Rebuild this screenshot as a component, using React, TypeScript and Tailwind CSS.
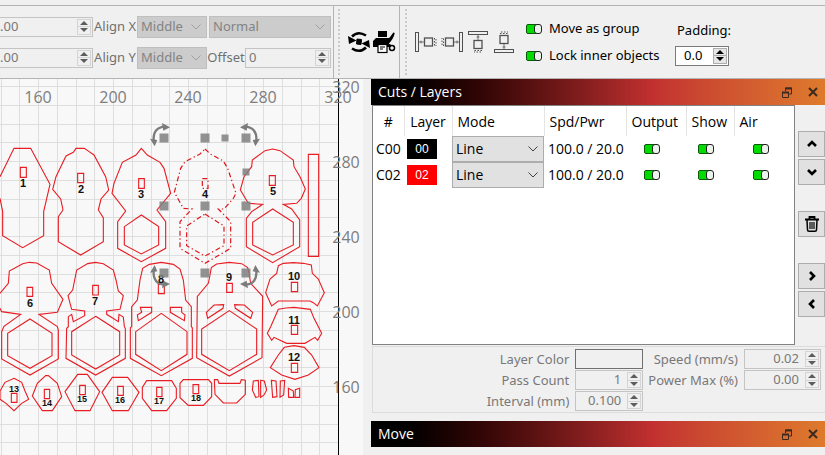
import { type ReactNode, useState } from "react";

const UI = "font-['Noto_Sans',sans-serif]";
const SEGOE = "font-['Open_Sans','Noto_Sans',sans-serif]";

function SpinArrows({ dim = false }: { dim?: boolean }) {
  const edge = dim ? "border-[#d4d4d4]" : "border-[#adadad] bg-[#e6e6e6]";
  const fill = dim ? "#5c5c5c" : "#000000";
  return (
    <span className={`my-px mr-px flex w-[14px] shrink-0 flex-col border ${edge}`}>
      <button type="button" aria-label="Increase" className={`flex flex-1 items-center justify-center border-b ${edge}`}>
        <svg width="8" height="4" viewBox="0 0 8 4"><path d="M4 0L8 4H0Z" fill={fill} /></svg>
      </button>
      <button type="button" aria-label="Decrease" className="flex flex-1 items-center justify-center">
        <svg width="8" height="4" viewBox="0 0 8 4"><path d="M0 0H8L4 4Z" fill={fill} /></svg>
      </button>
    </span>
  );
}

function SpinBox({ id, label, value, box, input, dim = true }: {
  id?: string; label?: string; value: string; box: string; input: string; dim?: boolean;
}) {
  return (
    <span className={`flex h-5 border ${dim ? "border-[#c4c4c4] text-[#787878]" : "border-[#7a7a7a] bg-white text-black"} ${box}`}>
      <input id={id} aria-label={label} defaultValue={value} className={`min-w-0 flex-1 bg-transparent outline-none ${input}`} />
      <SpinArrows dim={dim} />
    </span>
  );
}

function Chevron({ color }: { color: string }) {
  return (
    <svg className="pointer-events-none absolute right-[6px] top-1/2 -translate-y-1/2" width="10" height="6" viewBox="0 0 10 6" fill="none" stroke={color}>
      <path d="M0.5 0.5L5 5L9.5 0.5" />
    </svg>
  );
}

function ToolbarSelect({ id, label, value, width }: { id?: string; label?: string; value: string; width: string }) {
  return (
    <span className={`relative flex h-[22px] ${width}`}>
      <select id={id} aria-label={label} className="w-full appearance-none border border-[#bfbfbf] bg-[#cccccc] pl-[3px] text-[#838383]">
        <option>{value}</option>
      </select>
      <Chevron color="#a0a0a0" />
    </span>
  );
}

function Toggle({ id, label }: { id?: string; label?: string }) {
  const [on, setOn] = useState(true);
  return (
    <span className="relative inline-flex h-[10px] w-4 shrink-0">
      <input id={id} aria-label={label} type="checkbox" checked={on} onChange={() => setOn(!on)} className="absolute inset-0 m-0 opacity-0" />
      <svg className="pointer-events-none" width="16" height="10" viewBox="0 0 16 10" stroke="#202020">
        <rect x="0.5" y="0.5" width="11" height="9" rx="1.5" fill={on ? "#00dc00" : "#d0d0d0"} stroke="#0a5a0a" />
        <rect x="8.5" y="0.5" width="7" height="9" rx="2.5" fill="#ecf2ec" />
      </svg>
    </span>
  );
}

function Grip() {
  return <span className="h-[66px] w-0 border-l-2 border-dotted border-[#cacaca]" />;
}

function DockIcon({ label, turn }: { label: string; turn: number }) {
  return (
    <button type="button" aria-label={label}>
      <svg width="22" height="22" viewBox="-11 -11 22 22" fill="none" stroke="#505050">
        <g transform={`rotate(${turn})`}>
          <rect x="-10.5" y="-9.5" width="3" height="19" />
          <path d="M-7 0H-1M-5 -1.500V1.500" strokeWidth="0.8" />
          <rect x="-1.5" y="-4" width="8" height="8" strokeWidth="1.3" />
          <path d="M8.500 -4V5M10 -3V4" strokeDasharray="1.500 1.500" />
        </g>
      </svg>
    </button>
  );
}

function Toolbar() {
  return (
    <header className="flex h-[74px] border-y border-[#b4b4b4] bg-[#f0f0f0] text-[13px]">
      <div className="flex flex-col justify-center gap-[9px] border-r border-[#b4b4b4] pr-[2px]">
        <div className="flex h-[22px] items-center">
          <SpinBox label="Width" value=".00" box="w-[93px] border-l-0" input="pl-0" />
          <label htmlFor="align-x" className="w-11 whitespace-nowrap text-center text-[#707070]">Align X</label>
          <ToolbarSelect id="align-x" value="Middle" width="w-[70px]" />
          <span className="w-[2px]" />
          <ToolbarSelect label="Mode" value="Normal" width="w-[122px]" />
        </div>
        <div className="flex h-[22px] items-center">
          <SpinBox label="Height" value=".00" box="w-[93px] border-l-0" input="pl-0" />
          <label htmlFor="align-y" className="w-11 whitespace-nowrap text-center text-[#707070]">Align Y</label>
          <ToolbarSelect id="align-y" value="Middle" width="w-[70px]" />
          <label htmlFor="offset" className="w-[38px] text-center text-[#707070]">Offset</label>
          <SpinBox id="offset" value="0" box="w-[86px]" input="pl-[3px]" />
        </div>
      </div>
      <div className="flex w-[66px] items-center border-r border-[#b4b4b4] pl-1">
        <Grip />
        <button type="button" aria-label="Refresh" className="ml-[7px]">
          <svg width="24" height="22" viewBox="0 0 24 22" fill="none" stroke="#000" strokeWidth="2.600">
            <path d="M5 5.500Q11 -0.500 19 4.500M19 16.500Q13 22.500 5 17.500" />
            <path d="M1 5L2 13L9.500 9.500ZM23 17L22 9L14.500 12.500Z" fill="#000" stroke="none" />
            <path d="M10 8L14.500 8.500L14 13.500L9.500 13Z" fill="#000" stroke="#000" strokeWidth="1" />
          </svg>
        </button>
        <button type="button" aria-label="Print and cut" className="ml-[2px]">
          <svg width="24" height="24" viewBox="0 0 24 24">
            <path d="M5 1H14V7H5ZM3 8H16V17H0V11Z" fill="#000" />
            <rect x="5" y="14.500" width="9" height="8" fill="#fff" stroke="#000" strokeWidth="1.200" />
            <path d="M7 17H12M7 19H10" stroke="#000" />
            <path d="M21 3Q20 9 14 14.500L13 12Q18 8 21 3Z" fill="#000" stroke="#000" strokeWidth="1.500" />
            <path d="M13 13.500L18 16" stroke="#000" strokeWidth="2" />
            <circle cx="19" cy="18" r="2.500" fill="none" stroke="#000" strokeWidth="1.500" />
          </svg>
        </button>
      </div>
      <div className="flex flex-1 items-center pl-[5px]">
        <Grip />
        <div className="ml-2 flex gap-1">
          <DockIcon label="Dock left" turn={0} />
          <DockIcon label="Dock right" turn={180} />
          <DockIcon label="Dock top" turn={90} />
          <DockIcon label="Dock bottom" turn={270} />
        </div>
        <div className="ml-[11px] flex flex-col gap-[11px]">
          <label className="flex h-4 w-[149px] items-center gap-[7px] whitespace-nowrap"><Toggle />Move as group</label>
          <label className="flex h-4 w-[149px] items-center gap-[7px] whitespace-nowrap"><Toggle />Lock inner objects</label>
        </div>
        <div className="flex flex-col gap-2 pt-[3px]">
          <label htmlFor="padding" className="h-4 pl-[2px] leading-4">Padding:</label>
          <SpinBox id="padding" value="0.0" box="w-[54px]" input="pl-2" dim={false} />
        </div>
      </div>
    </header>
  );
}

/* Outlines are stored at three units per canvas pixel, one list per area of the sheet. */
const AREAS = [
  {
    place: "translate(0 75) scale(0.33333)",
    shapes: [
      "M0 305L42 220H92L150 328L131 410V482L68 518L8 482V410L0 370M61 277h18v30h-18Z",
      "M228 220H253L262 226L282 240L317 305L326 345L303 372L295 405L310 428V500L242 540L175 500V425L189 405L182 372L158 343L168 305L198 243L220 232ZM233 295h18v28h-18Z",
      "M424 220L442 240L480 262L492 280L512 355L471 405L497 440V520L424 560L353 520V440L377 408L336 355L342 325L367 262L408 240ZM416 311h17v29h-17ZM424 420L476 455V510L424 537L373 510V455Z",
    ],
  },
  {
    place: "translate(140 75) scale(0.33333)",
    shapes: [
      "M398 222L420 227L460 255L462 275L480 305L496 342L484 370L470 385L430 388L455 402L479 435V515L398 563L319 515V430L335 410L368 388L325 385L301 345L312 305L335 275L337 255L375 227ZM388 302h18v29h-18ZM398 402L460 442V510L398 540L338 510V442Z",
      "M505 238h31v306h-31Z",
    ],
  },
  {
    place: "translate(0 255) scale(0.33333)",
    shapes: [
      "M0 115L25 85L28 48L68 26L88 22L110 24L148 45L155 85L189 133L172 172L117 178L172 215L175 225V312L90 360L5 312V230L12 214L62 178L5 170L0 160M81 97h17v27h-17ZM90 192L156 235V302L90 340L23 302V235Z",
      "M262 26L287 22L310 26L340 45L348 75L355 108L370 122L360 163L320 168V178L355 200L357 178L370 186L373 215L376 220V310L287 360L198 310L200 220L205 215V185L215 178L220 200L254 182V168L215 163L204 122L218 105L230 45ZM278 91h17v29h-17ZM287 184L359 230V300L287 342L215 300V230Z",
      "M448 28L484 22L520 28L540 42L550 75L557 135L574 155V215L577 218V310L484 362L391 310V218L395 215V155L412 135L420 75L428 40ZM475 88h18v28h-18ZM484 175L561 230V298L484 347L407 298V230Z",
      "M421 157H455V172L415 197L412 180L425 172ZM545 157H511V172L553 197L555 180L545 172Z",
      "M42 370L65 382L75 408L86 433L65 445L42 467L18 445L0 433V408L15 382ZM34 415h17v27h-17Z",
      "M137 362H145L172 385L185 425L157 467H127L97 423L112 385ZM133 403h16v28h-16Z",
      "M233 358H262L299 410L270 467H225L195 410ZM239 391h17v28h-17Z",
      "M337 367H383L417 412L385 467H337L306 412ZM353 394h17v27h-17Z",
      "M440 377H515L529 400V430L500 467H455L427 430V397ZM470 397h16v28h-16Z",
    ],
  },
  {
    place: "translate(170 255) scale(0.33333)",
    shapes: [
      "M340 25L370 23L400 25L424 30L427 55L445 72L463 113L442 153L430 143L420 138H325L305 153L287 113L300 72L320 55L325 32ZM364 82h19v28h-19Z",
      "M348 159L372 157L421 163L432 190L455 235L443 256L435 247L405 265H350L312 247L305 256L292 235L302 215L325 163ZM364 211h19v27h-19Z",
      "M372 272L403 277L425 300L447 338L415 360L375 373L335 360L301 338L325 300L343 277ZM364 325h19v27h-19Z",
      "M120 60L124 38L140 27L178 22L215 26L233 38L238 60L242 85L278 124L276 308L178 363L80 308L82 124L115 85ZM170 85h17v27h-17ZM178 167L260 222V298L178 347L95 298V222Z",
      "M132 150L161 149L159 160L113 190L109 172ZM223 150L194 149L196 160L242 190L248 172Z",
      "M40 374H115L125 385V425L100 451H55L30 428V385ZM69 389h17v27h-17Z",
      "M133 374H143L147 385H210L214 374L226 376V418L200 444H160L135 418Z",
      "M250 378L265 376L267 425L257 427L247 405ZM272 376L283 378L290 405L282 420L272 427Z",
      "M304 376L318 378L321 425L308 427ZM331 378L344 376L341 420L330 427Z",
      "M355 400L370 408L371 427H356ZM389 400L376 404L375 427H389Z",
    ],
  },
];

const SELECTED =
  "M195 222L211 237L250 258L263 280L288 355L279 372L252 402H235L272 440V520L195 565L120 520V440L156 402L130 400L103 352L122 280L135 260L180 237ZM187 311h17v29h-17ZM195 417L252 453V512L195 543L140 512V453Z";

const PART_NUMBERS: [string, number, number, number][] = [
  ["1", 23, 183, 11], ["2", 81, 189, 11], ["3", 141, 194, 11], ["4", 205, 194, 11], ["5", 273, 191, 11],
  ["6", 30, 303, 11], ["7", 95, 301, 11], ["8", 161, 279, 11], ["9", 229, 277, 11],
  ["10", 294, 276, 11], ["11", 294, 320, 11], ["12", 294, 357, 11],
  ["13", 14, 389, 9], ["14", 47, 403, 9], ["15", 82, 399, 9], ["16", 120, 400, 9], ["17", 159, 401, 9], ["18", 196, 398, 9],
];

const HANDLES: [number, number, number][] = [
  [164, 138, 9], [205, 138, 9], [225, 138, 7], [246, 138, 9], [246, 172, 7],
  [164, 206, 9], [205, 206, 9], [246, 206, 9], [164, 273, 9], [205, 273, 9], [246, 273, 9],
];

const CORNERS = ["", "translate(390 0) scale(-1 1)", "translate(0 784) scale(1 -1)", "translate(390 784) scale(-1 -1)"];

function Canvas() {
  const columns = Array.from({ length: 19 }, (_, i) => Math.round(338 - i * 18.75) + 0.5);
  const rows = Array.from({ length: 20 }, (_, i) => Math.round(86 + i * 18.75) + 0.5);
  return (
    <main className="w-[44%] shrink-0 overflow-hidden bg-[#f8f8f8]">
      <svg width="363" height="376" viewBox="0 79 363 376" role="img" aria-label="Cut sheet">
        <g stroke="#dedede">
          {columns.map((x) => <path key={x} d={`M${x} 79V455`} />)}
          {rows.map((y) => <path key={y} d={`M0 ${y}H338`} />)}
        </g>
        <path d="M338.5 79V455" stroke="#000" />
        <g className={SEGOE} fontSize="16" fill="#7d7d7d" textAnchor="middle">
          {["160", "200", "240", "280", "320"].map((t, i) => <text key={t} x={38 + i * 75} y="103">{t}</text>)}
          {["320", "280", "240", "200", "160"].map((t, i) => <text key={t} x="346" y={93 + i * 75}>{t}</text>)}
        </g>
        {AREAS.map((area) => (
          <g key={area.place} transform={area.place} fill="none" stroke="#e81c22" strokeWidth="3.300">
            {area.shapes.map((d) => <path key={d} d={d} />)}
          </g>
        ))}
        <g transform="translate(140 75) scale(0.33333)" fill="none">
          <path d={SELECTED} stroke="#e0141a" strokeWidth="3.600" strokeDasharray="15 8 4 8" />
          {CORNERS.map((t) => (
            <g key={t} transform={t} fill="#7c7c7c">
              <path d="M41 198Q38 156 76 155" fill="none" stroke="#7c7c7c" strokeWidth="7" />
              <path d="M66 144L90 157L70 167ZM30 191L44 214L52 195Z" />
            </g>
          ))}
        </g>
        <g className="font-['Liberation_Sans',sans-serif] font-bold" fill="#111" textAnchor="middle">
          {PART_NUMBERS.map(([t, x, y, size]) => (
            <text key={t} x={x} y={y + (size === 11 ? 4 : 3)} fontSize={size}>{t}</text>
          ))}
        </g>
        <g fill="#808080" fillOpacity="0.85">
          {HANDLES.map(([x, y, s]) => <rect key={`${x}-${y}`} x={x - s / 2} y={y - s / 2} width={s} height={s} />)}
        </g>
      </svg>
    </main>
  );
}

function TitleBar({ title }: { title: string }) {
  return (
    <div className={`flex h-[26px] items-center bg-linear-to-r from-black via-[#c23030] via-62% to-[#de7a2c] pl-[7px] pr-[7px] text-sm text-white ${SEGOE}`}>
      <h2 className="flex-1">{title}</h2>
      <button type="button" aria-label={`Float ${title}`} className="mr-4">
        <svg width="10" height="11" viewBox="0 0 10 11" fill="none" stroke="#3c2a20">
          <path d="M3.500 4V1H9.500V7H7" /><path d="M3 1.500H10M0 5.500H7" strokeWidth="2" /><path d="M0.500 5V10.500H6.500V5" />
        </svg>
      </button>
      <button type="button" aria-label={`Close ${title}`}>
        <svg width="10" height="10" viewBox="0 0 10 10" stroke="#3c2a20" strokeWidth="2"><path d="M1 1L9 9M9 1L1 9" /></svg>
      </button>
    </div>
  );
}

const LAYERS = [
  { id: "C00", no: "00", color: "bg-black" },
  { id: "C02", no: "02", color: "bg-[#ff0000]" },
];

function LayerTable() {
  const head = "h-[30px] border-r border-[#e4e4e4] p-0 pt-[2px] font-normal";
  return (
    <div className={`h-[240px] min-w-0 flex-1 border border-[#828282] bg-white text-sm ${SEGOE}`}>
      <table className="w-full table-fixed border-collapse whitespace-nowrap">
        <colgroup>
          <col className="w-[31px]" /><col className="w-12" /><col className="w-[92px]" /><col className="w-[82px]" />
          <col className="w-[60px]" /><col className="w-12" /><col />
        </colgroup>
        <thead>
          <tr>
            <th className={`${head} text-center`}>#</th>
            <th className={`${head} text-center`}>Layer</th>
            <th className={`${head} pl-[5px] text-left`}>Mode</th>
            <th className={`${head} pl-[5px] text-left`}>Spd/Pwr</th>
            <th className={`${head} pl-[5px] text-left`}>Output</th>
            <th className={`${head} pl-[5px] text-left`}>Show</th>
            <th className="h-[30px] p-0 pl-[5px] pt-[2px] text-left font-normal">Air</th>
          </tr>
        </thead>
        <tbody>
          {LAYERS.map((layer) => (
            <tr key={layer.id} className="h-[26px]">
              <td className="p-0 pl-[3px]">{layer.id}</td>
              <td className="p-0 pl-[3px]">
                <button type="button" className={`block h-5 w-[30px] font-['Liberation_Sans',sans-serif] text-xs text-white ${layer.color}`}>{layer.no}</button>
              </td>
              <td className="p-0">
                <span className="relative flex h-[26px]">
                  <select aria-label={`Mode of ${layer.id}`} className="w-full appearance-none border border-[#adadad] bg-[#e1e1e1] pl-[3px] text-black">
                    <option>Line</option>
                  </select>
                  <Chevron color="#404040" />
                </span>
              </td>
              <td className="p-0 pl-1">100.0 / 20.0</td>
              <td className="p-0 pl-[18px] leading-none"><Toggle label={`Output ${layer.id}`} /></td>
              <td className="p-0 pl-3 leading-none"><Toggle label={`Show ${layer.id}`} /></td>
              <td className="p-0 pl-[19px] leading-none"><Toggle label={`Air ${layer.id}`} /></td>
            </tr>
          ))}
        </tbody>
      </table>
    </div>
  );
}

function SideButton({ label, children }: { label: string; children: ReactNode }) {
  return (
    <button type="button" aria-label={label} className="flex h-[26px] w-[27px] items-center justify-center border border-[#adadad] bg-[#e1e1e1]">
      {children}
    </button>
  );
}

function Arrow({ d }: { d: string }) {
  return (
    <svg width="12" height="12" viewBox="0 0 12 12" fill="none" stroke="#000" strokeWidth="2.600"><path d={d} /></svg>
  );
}

function SideButtons() {
  return (
    <div className="flex w-[30px] shrink-0 flex-col items-end gap-[26px] pt-[26px]">
      <div className="flex flex-col gap-[2px]">
        <SideButton label="Move layer up"><Arrow d="M2 8L6 4L10 8" /></SideButton>
        <SideButton label="Move layer down"><Arrow d="M2 4L6 8L10 4" /></SideButton>
      </div>
      <SideButton label="Delete layer">
        <svg width="14" height="16" viewBox="0 0 14 16" fill="none" stroke="#000" strokeWidth="1.500">
          <path d="M0 3.500H14M4.500 3V1H9.500V3" strokeWidth="1.800" />
          <path d="M2 4L2.500 14Q2.500 15.200 4 15.200H10Q11.500 15.200 11.500 14L12 4" />
          <path d="M5 6V13M7 6V13M9 6V13" strokeWidth="1.200" />
        </svg>
      </SideButton>
      <div className="flex flex-col gap-[2px]">
        <SideButton label="Next"><Arrow d="M4 2L8 6L4 10" /></SideButton>
        <SideButton label="Previous"><Arrow d="M8 2L4 6L8 10" /></SideButton>
      </div>
    </div>
  );
}

function LayerSettings() {
  const label = "pr-[6px] text-right leading-5";
  return (
    <form className="mt-px flex justify-end gap-x-[5px] border border-r-0 border-[#dcdcdc] pb-px pr-1 pt-[2px] text-[13px] text-[#787878]">
      <div className="grid grid-cols-[auto_68px] gap-y-px">
        <label htmlFor="layer-color" className={label}>Layer Color</label>
        <button id="layer-color" type="button" aria-label="Layer Color" className="h-5 border border-[#707070]" />
        <label htmlFor="pass-count" className={label}>Pass Count</label>
        <SpinBox id="pass-count" value="1" box="w-[68px]" input="pr-[6px] text-right" />
        <label htmlFor="interval" className={label}>Interval (mm)</label>
        <SpinBox id="interval" value="0.100" box="w-[68px]" input="pr-[6px] text-right" />
      </div>
      <div className="grid grid-cols-[auto_77px] content-start gap-y-px">
        <label htmlFor="speed" className={label}>Speed (mm/s)</label>
        <SpinBox id="speed" value="0.02" box="w-[77px]" input="pr-[6px] text-right" />
        <label htmlFor="power" className={label}>Power Max (%)</label>
        <SpinBox id="power" value="0.00" box="w-[77px]" input="pr-[6px] text-right" />
      </div>
    </form>
  );
}

export default function App() {
  return (
    <div className={`flex min-h-screen flex-col overflow-hidden bg-[#f0f0f0] pt-[5px] text-black ${UI}`}>
      <Toolbar />
      <div className="flex flex-1">
        <Canvas />
        <aside className="ml-2 min-w-0 flex-1">
          <TitleBar title="Cuts / Layers" />
          <div className="pl-px">
            <div className="flex">
              <LayerTable />
              <SideButtons />
            </div>
            <LayerSettings />
          </div>
          <div className="mt-2">
            <TitleBar title="Move" />
          </div>
        </aside>
      </div>
    </div>
  );
}
